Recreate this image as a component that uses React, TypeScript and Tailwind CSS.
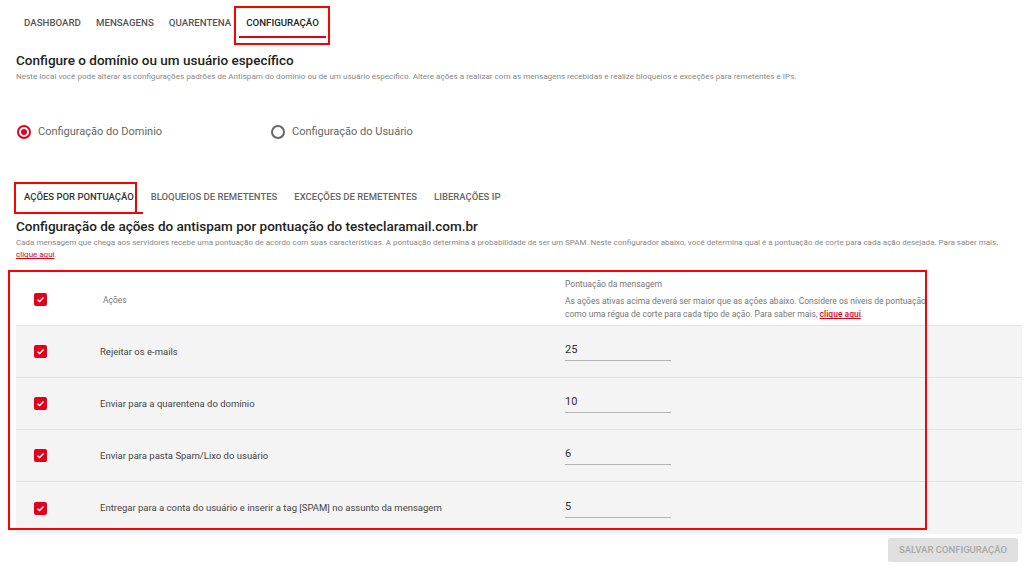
import React, { useState } from 'react';

type Acao = {
  id: number;
  label: string;
  score: string;
};

const acoesIniciais: Acao[] = [
  { id: 1, label: 'Rejeitar os e-mails', score: '25' },
  { id: 2, label: 'Enviar para a quarentena do domínio', score: '10' },
  { id: 3, label: 'Enviar para pasta Spam/Lixo do usuário', score: '6' },
  { id: 4, label: 'Entregar para a conta do usuário e inserir a tag [SPAM] no assunto da mensagem', score: '5' },
];

const Checkbox: React.FC<{ checked: boolean; onChange: () => void }> = ({ checked, onChange }) => (
  <button
    onClick={onChange}
    className={`flex h-[13px] w-[13px] items-center justify-center rounded-[2px] ${checked ? 'bg-[#e3001b]' : 'border-2 border-[#777] bg-white'}`}
  >
    {checked && (
      <svg viewBox="0 0 12 12" className="h-[9px] w-[9px]">
        <path d="M2 6.2 L4.8 8.8 L10 3.4" fill="none" stroke="white" strokeWidth="1.8" />
      </svg>
    )}
  </button>
);

const Radio: React.FC<{ checked: boolean; label: string; onClick: () => void }> = ({ checked, label, onClick }) => (
  <button onClick={onClick} className="flex items-center gap-[7px]">
    <span
      className={`flex h-[14px] w-[14px] items-center justify-center rounded-full border-2 ${checked ? 'border-[#e3001b]' : 'border-[#666]'}`}
    >
      {checked && <span className="h-[6px] w-[6px] rounded-full bg-[#e3001b]" />}
    </span>
    <span className="text-[11px] text-[#666]">{label}</span>
  </button>
);

const App: React.FC = () => {
  const [modo, setModo] = useState<'dominio' | 'usuario'>('dominio');
  const [acoes, setAcoes] = useState(acoesIniciais);
  const [ativos, setAtivos] = useState<number[]>([1, 2, 3, 4]);

  const todosAtivos = ativos.length === acoes.length;

  const toggleAcao = (id: number) => {
    setAtivos(prev => (prev.includes(id) ? prev.filter(a => a !== id) : [...prev, id]));
  };

  const toggleTodos = () => {
    setAtivos(todosAtivos ? [] : acoes.map(a => a.id));
  };

  const handleScore = (id: number, value: string) => {
    setAcoes(prev => prev.map(a => (a.id === id ? { ...a, score: value } : a)));
  };

  return (
    <div className="relative min-h-screen w-[1024px] bg-white font-['Roboto',sans-serif] text-[#333]">
      {/* menu principal */}
      <nav className="flex gap-[15px] pl-[24px] pt-[16px] text-[9.7px] font-medium uppercase text-[#555]">
        <a className="pb-[7px]">Dashboard</a>
        <a className="pb-[7px]">Mensagens</a>
        <a className="pb-[7px]">Quarentena</a>
        <a className="relative pb-[7px] text-[#222]">
          Configuração
          <span className="absolute -left-[7px] -right-[7px] bottom-[0px] h-[2px] bg-[#e3001b]" />
        </a>
      </nav>

      <header className="px-[16px] pt-[12px]">
        <h1 className="text-[13.5px] font-medium leading-[20px] text-[#222]">
          Configure o domínio ou um usuário específico
        </h1>
        <p className="text-[8.1px] text-[#888]">
          Neste local você pode alterar as configurações padrões de Antispam do domínio ou de um usuário específico. Altere ações a realizar com as mensagens recebidas e realize bloqueios e exceções para remetentes e IPs.
        </p>
      </header>

      <div className="flex pl-[17px] pt-[42px]">
        <div className="w-[254px]">
          <Radio checked={modo === 'dominio'} label="Configuração do Dominio" onClick={() => setModo('dominio')} />
        </div>
        <Radio checked={modo === 'usuario'} label="Configuração do Usuário" onClick={() => setModo('usuario')} />
      </div>

      {/* abas */}
      <div className="flex gap-[17px] pl-[24px] pt-[50px] text-[9.5px] font-medium uppercase text-[#666]">
        <a className="relative pb-[10px] text-[#333]">
          Ações por pontuação
          <span className="absolute -left-[10px] -right-[9px] bottom-[0px] h-[2px] bg-[#e3001b]" />
        </a>
        <a className="pb-[10px]">Bloqueios de remetentes</a>
        <a className="pb-[10px]">Exceções de remetentes</a>
        <a className="pb-[10px]">Liberações IP</a>
      </div>

      <section className="pl-[16px] pr-[8px] pt-[2px]">
        <h2 className="text-[13.5px] font-medium leading-[20px] text-[#222]">
          Configuração de ações do antispam por pontuação do testeclaramail.com.br
        </h2>
        <p className="mt-[1px] text-[8px] leading-[12px] text-[#888]">
          Cada mensagem que chega aos servidores recebe uma pontuação de acordo com suas características. A pontuação determina a probabilidade de ser um SPAM. Neste configurador abaixo, você determina qual é a pontuação de corte para cada ação desejada. Para saber mais,{' '}
          <a className="text-[#e3001b] underline">clique aqui</a>.
        </p>
      </section>

      {/* tabela */}
      <div className="ml-[16px] mr-[2px] mt-[13px]">
        <div className="grid h-[52px] grid-cols-[84px_465px_1fr] items-center border-b border-[#e2e2e2] bg-white">
          <div className="pl-[18px]">
            <Checkbox checked={todosAtivos} onChange={toggleTodos} />
          </div>
          <div className="pl-[3px] text-[8.5px] text-[#777]">Ações</div>
          <div className="text-[8.5px] leading-[13px] text-[#777]">
            <div className="mb-[4px]">Pontuação da mensagem</div>
            <div>
              As ações ativas acima deverá ser maior que as ações abaixo. Considere os níveis de pontuação
              <br />
              como uma régua de corte para cada tipo de ação. Para saber mais,{' '}
              <a className="font-medium text-[#e3001b] underline">clique aqui</a>.
            </div>
          </div>
        </div>
        {acoes.map(acao => (
          <div
            key={acao.id}
            className="grid h-[52px] grid-cols-[84px_465px_1fr] items-center border-b border-[#e2e2e2] bg-[#f4f4f4] last:border-b-0"
          >
            <div className="pl-[18px]">
              <Checkbox checked={ativos.includes(acao.id)} onChange={() => toggleAcao(acao.id)} />
            </div>
            <div className="text-[9.5px] text-[#444]">{acao.label}</div>
            <div className="-mt-[6px]">
              <input
                value={acao.score}
                onChange={e => handleScore(acao.id, e.target.value)}
                className="h-[20px] w-[106px] border-b border-[#b5b5b5] bg-transparent pb-[2px] text-[11px] leading-[16px] text-[#333] outline-none"
              />
            </div>
          </div>
        ))}
      </div>

      <div className="flex justify-end pr-[6px] pt-[4px]">
        <button className="h-[24px] w-[130px] rounded-[2px] bg-[#e0e0e0] text-[9.5px] font-medium uppercase text-[#a8a8a8]">
          Salvar configuração
        </button>
      </div>

      {/* marcações em vermelho */}
      <div className="pointer-events-none absolute left-[234px] top-[6px] h-[39px] w-[96px] border-2 border-[#ff0000]" />
      <div className="pointer-events-none absolute left-[14px] top-[182px] h-[32px] w-[123px] border-2 border-[#ff0000]" />
      <div className="pointer-events-none absolute left-[8px] top-[270px] h-[260px] w-[919px] border-2 border-[#ff0000]" />
    </div>
  );
};

export default App;
